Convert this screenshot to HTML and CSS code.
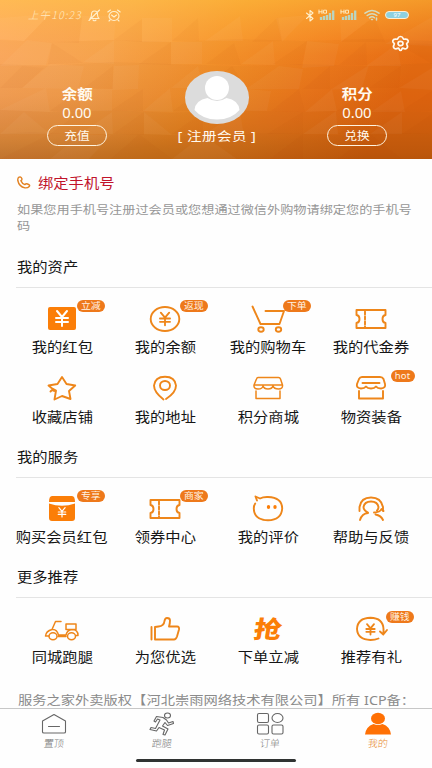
FILE: index.html
```html
<!DOCTYPE html>
<html lang="zh-CN">
<head>
<meta charset="utf-8">
<title>我的</title>
<link rel="stylesheet" href="styles.css">
</head>
<body>
<svg class="defs" width="0" height="0">
  <defs>
    <linearGradient id="bgx" x1="0" y1="0" x2="1" y2=".2">
      <stop offset="0" stop-color="#ffae69"/><stop offset=".3" stop-color="#faa650"/><stop offset=".55" stop-color="#f6932b"/><stop offset=".8" stop-color="#f17a1b"/><stop offset="1" stop-color="#e7680f"/>
    </linearGradient>
    <linearGradient id="bgy" x1="0" y1="0" x2="0" y2="1">
      <stop offset="0" stop-color="#ffc640" stop-opacity=".5"/><stop offset=".35" stop-color="#ffb040" stop-opacity=".08"/><stop offset=".6" stop-color="#c06020" stop-opacity=".1"/><stop offset=".83" stop-color="#a85a14" stop-opacity=".28"/><stop offset="1" stop-color="#93500e" stop-opacity=".46"/>
    </linearGradient>
    <g id="ticket"><path d="M11.500 11h29v5q-3 .5-3 4t3 4v5h-29v-5q3-.5 3-4t-3-4z"/><path d="M20 12.500v16" stroke-dasharray="3 2"/></g>
    <g id="yen"><path d="M-5-7 0-1 5-7M0-1V8M-6 0H6M-6 4H6"/></g>
  </defs>
</svg>
<div class="screen">
  <header class="hero">
    <svg class="hero-bg" viewBox="0 0 432 159" preserveAspectRatio="none">
      <path fill="url(#bgx)" d="M0 0h432v159H0z"/><path fill="url(#bgy)" d="M0 0h432v159H0z"/>
      <g fill="#8a3300" fill-opacity=".035">
        <path d="M0 40 50 42 114 40 172 42 237 39 303 41 370 39 432 41V159H0z"/>
        <path d="M0 64 46 66 112 62 171 64 235 66 300 64 366 66 432 63V159H0z"/>
        <path d="M0 110 50 112 112 110 170 113 240 110 301 112 367 110 432 112V159H0z"/>
        <path d="M0 134 30 132 80 135 139 134 203 136 270 133 335 135 400 133 432 134V159H0z"/>
      </g>
      <g fill="#fff" fill-opacity=".035">
        <path d="M0 18 50 14 24 41 0 39zM82 16h34l-2 24-35 1zM142 18h30v24h-30zM205 41l35-25 3 25zM276 18l32-3-26 27zM340 15l32 3-31 24zM385 44l47-27v29z"/>
        <path d="M0 66 27 40 52 43 46 65zM83 62l31-22v24zM171 42h31v22h-31zM241 64l32-23 2 24zM307 41l32 3-5 22-32 2zM366 66l31-22 4 22z"/>
        <path d="M22 88 50 64 84 66 78 89zM112 90l2-24 25-1-1 24zM171 88l27-22 5 22zM246 89l33-23 24 3-4 20zM330 90l39-25-7 23zM399 88l33-20v22z"/>
        <path d="M0 110 46 88 50 112zM80 111V89h32v22zM143 111l27-23 3 24zM216 111l30-22 25 2-4 20zM305 112l27-23 5 22zM371 112l30-21 4 21z"/>
        <path d="M0 134 24 112l26 22zM80 134l32-22 1 22zM144 134v-22l28 23zM203 135l37-24 4 25zM303 134l33-23 2 23zM370 134l32-22v22zM50 159l30-24 31 0-22 24zM172 159l31-24 34 24z"/>
      </g>
      <g fill="#a63d00" fill-opacity=".035">
        <path d="M24 41 50 14l32 4-3 25zM114 40l28-21v23zM172 41l26-23 1 23zM252 42l26-25 4 24zM341 42l33-25 11 25z"/>
        <path d="M52 43l31 20-35 1zM139 64l32-22v23zM206 64l28-21 7 22zM273 64l34-23-5 24zM339 65l27-23 1 23zM397 43l35 1v20z"/>
        <path d="M0 88l22-22 22 2-22 20zM84 88l29-22v23zM202 88l30-22 14 22zM303 89l27-23v23zM369 88l32-22-2 22z"/>
        <path d="M50 111l30-22v23zM112 110l31-21v22zM173 111l30-22 13 22zM271 111l28-22 6 23zM337 111l30-22 4 22zM401 111l31-20v20z"/>
        <path d="M50 134l30-22v22zM113 134l31-22v23zM172 134l31-22v23zM267 134l36-22v22zM338 134l31-22 1 22zM402 134l30-20v20zM0 159l50-25v25zM111 159l28-25 33 25zM270 159l33-25v25zM338 159l32-25 32 25z"/>
      </g>
    </svg>
    <div class="status">
      <div class="status-left">
        <span class="time">上午10:23</span>
        <svg width="13" height="13" viewBox="0 0 13 13"><path d="M2 9.500q1.500-1.500 1.500-4 0-3.500 3-3.500t3 3.500q0 2.500 1.500 4zM5 11q1.500 1.500 3 0M1 11.500 11.500 1"/></svg>
        <svg width="14" height="13" viewBox="0 0 14 13"><ellipse cx="7" cy="7" rx="5" ry="4.500"/><path d="M.8 3 3.500 1M13.200 3 10.500 1M4.500 6 7 8l2.500-2M3 11l-1 1M11 11l1 1"/></svg>
      </div>
      <div class="status-right">
        <svg width="10" height="13" viewBox="0 0 10 13"><path d="M1.500 4 8 9.500 5 12V1.500l3 2.500-6.500 5.500"/></svg>
        <svg class="sig" width="17" height="12" viewBox="0 0 17 12"><path class="bars" d="M3 11V8M6 11V7M9 11V6M12 11V4M15.200 11V1.500"/><path d="M1 1v3.500M4 1v3.500M1 2.800h3M6 1.200h2.500V4.200H6z" stroke-width=".9"/></svg>
        <svg class="sig second" width="17" height="12" viewBox="0 0 17 12"><path class="bars" d="M3 11V8M6 11V7M9 11V6M12 11V4M15.200 11V1.500"/><path d="M1 1v3.500M4 1v3.500M1 2.800h3M6 1.200h2.500V4.200H6z" stroke-width=".9"/></svg>
        <svg class="wifi" width="16" height="12" viewBox="0 0 16 12"><path d="M1 4.200q7-5.400 14 0M3.200 6.500q4.800-3.500 9.600 0M5.500 8.800q2.500-2 5 0M7.500 10.500h1M12.500 9v2"/></svg>
        <span class="battery">97</span>
      </div>
    </div>
    <svg class="gear" width="19" height="17" viewBox="0 0 19 17"><path d="M9.500 1.500q2 0 2.700 2 .5 1 2 .7 2.500-.2 3 1.600.4 1.400-1.200 2.400-.8.700 0 1.800 1.200 2-.1 3.100-1.600 1.400-3.600.2-.9-.4-1.500.8-.5 1.400-1.300 1.400t-1.300-1.400q-.6-1.200-1.500-.8-2 1.200-3.600-.2-1.300-1.100-.1-3.100.8-1.100 0-1.800Q1.400 7.200 1.800 5.800q.5-1.800 3-1.600 1.500.3 2-.7.700-2 2.700-2z"/><ellipse cx="9.500" cy="8.500" rx="2.500" ry="2.200"/></svg>
    <div class="account">
      <div class="stat"><b class="t">余额</b><span class="num">0.00</span><span class="pill"><span class="t">充值</span></span></div>
      <div class="member">
        <svg width="66" height="54" viewBox="0 0 66 54"><ellipse cx="33" cy="27.500" rx="32" ry="26.500" fill="#dcdcdc"/><ellipse cx="33" cy="18" rx="12" ry="12" fill="#fff"/><path d="M10.500 40q1-10 13-12 9.500 6 19 0 12 2 13 12-8 9.500-22.500 9.500T10.500 40z" fill="#fff"/></svg>
        <span class="t">[ 注册会员 ]</span>
      </div>
      <div class="stat"><b class="t">积分</b><span class="num">0.00</span><span class="pill"><span class="t">兑换</span></span></div>
    </div>
  </header>
  <main>
    <div class="bind">
      <div class="bind-title"><svg width="14" height="13" viewBox="0 0 14 13"><path d="M2 1.200q2-.9 2.800 1.300.5 1.500-.9 2.200 1 2.600 4 3.900 1-1.200 2.700-.6 3 1 1.600 2.500-1.400 1.600-4.200 1.400Q2 10.500.8 4.500.5 2 2 1.200z"/></svg><span class="t">绑定手机号</span></div>
      <p class="t">如果您用手机号注册过会员或您想通过微信外购物请绑定您的手机号码</p>
    </div>
    <section>
      <h2><span class="t">我的资产</span></h2>
      <div class="grid">
        <div class="cell"><svg viewBox="0 0 52 40"><rect class="fill" x="12" y="8" width="28" height="23" rx="2"/><use href="#yen" class="white" transform="translate(26 19)"/></svg><i><span>立减</span></i><span class="t">我的红包</span></div>
        <div class="cell"><svg viewBox="0 0 52 40"><ellipse cx="26" cy="20" rx="14.300" ry="12"/><use href="#yen" transform="translate(26 19.500) scale(.84)" stroke-width="2.200"/></svg><i><span>返现</span></i><span class="t">我的余额</span></div>
        <div class="cell"><svg viewBox="0 0 52 40"><path d="M10.500 7.500 18.500 25H37.500L42 12H23.500"/><ellipse cx="19" cy="30.500" rx="2.700" ry="2.200"/><ellipse cx="36.500" cy="30.500" rx="2.700" ry="2.200"/></svg><i><span>下单</span></i><span class="t">我的购物车</span></div>
        <div class="cell"><svg viewBox="0 0 52 40"><use href="#ticket"/></svg><span class="t">我的代金券</span></div>
        <div class="cell"><svg viewBox="0 0 52 40"><path d="M14.500 22.500 16 21 18 22M15.500 19 12.500 16.500 21.500 15 26 8l4.500 7 8.700 1.500-6.200 5.500 1.500 8L26 27l-7.500 3.500 1.500-9z"/></svg><span class="t">收藏店铺</span></div>
        <div class="cell"><svg viewBox="0 0 52 40"><path d="M24.500 30.500Q15 23 15 16.500 16 7.700 26 7.700T37 16.500q0 7-10 13.500"/><ellipse cx="26" cy="16.500" rx="5" ry="4.500"/></svg><span class="t">我的地址</span></div>
        <div class="cell"><svg class="thin" viewBox="0 0 52 40"><path d="M16 8.500H36.500Q38 8.500 38.500 10L40.500 16H12L14.500 10Q15 8.500 16 8.500zM12 16q-.5 4 4 4t5-3q1 3 5 3t5-3q1 3 5.500 3t4-4M14 22v7.500h24V22"/></svg><span class="t">积分商城</span></div>
        <div class="cell"><svg viewBox="0 0 52 40"><path d="M17 8h18q2.500 0 3.500 2L40 15q1 4-4 4.500-3.500 0-5-2-1.500 2-5 2t-5-2q-1.500 2-5 2-5-.5-4-4.500l2-5q1-2 3-2zM17.500 14h17M14 22v7.500h24V22"/></svg><i class="hot"><span>hot</span></i><span class="t">物资装备</span></div>
      </div>
    </section>
    <section>
      <h2><span class="t">我的服务</span></h2>
      <div class="grid">
        <div class="cell"><svg viewBox="0 0 52 40"><path class="fill" d="M13 13q0-6 3-6h20q3 0 3 6zM13 14.500q13 4.500 26 0V29q0 3-3 3H16q-3 0-3-3z"/><use href="#yen" class="white" transform="translate(26 23) scale(.62)"/></svg><i><span>专享</span></i><span class="t">购买会员红包</span></div>
        <div class="cell"><svg viewBox="0 0 52 40"><use href="#ticket"/></svg><i><span>商家</span></i><span class="t">领券中心</span></div>
        <div class="cell"><svg viewBox="0 0 52 40"><path d="M15 11.500 13.500 7.500 18 9.500Q21 7.800 26 8q14 .5 14.200 11.500Q39.500 31 26 31.300 12 31 11.800 19.500q0-3 1.400-5"/><ellipse class="fill" cx="26.500" cy="18" rx="1.700" ry="2"/><ellipse class="fill" cx="33" cy="18" rx="1.700" ry="2"/></svg><span class="t">我的评价</span></div>
        <div class="cell"><svg viewBox="0 0 52 40"><path d="M14.500 22v-4Q16 8.500 26 8.500T38 18v4M23 23.500Q18.500 21.500 18.500 18q1-5.500 7.500-5.500t7.500 5.500q0 2-1.500 3.500M29 23.500q6 0 7.500-3.500l2 2M15 31q2-6.500 8-7M30.500 25.500q5.500 1 7.500 5.500"/></svg><span class="t">帮助与反馈</span></div>
      </div>
    </section>
    <section>
      <h2><span class="t">更多推荐</span></h2>
      <div class="grid">
        <div class="cell"><svg class="thin" viewBox="0 0 52 40"><path d="M25 12.500H19.500L16 20.500Q10 22 9.500 27H13M30 15h10v5.500H30zM17 20.500q4 0 5.500 5.500h7.500q1-5 6-5.500 6 0 6 6H40M22 27.500h8"/><ellipse cx="17" cy="27.200" rx="4" ry="3.500"/><ellipse cx="35.500" cy="27.200" rx="4" ry="3.500"/></svg><span class="t">同城跑腿</span></div>
        <div class="cell"><svg viewBox="0 0 52 40"><path d="M12.500 18v12.500M16 18v12.500h19q2 0 3-3l2-7q.5-3-2-3h-8q1-3 1-6 0-2.500-3-2.500-2 0-2.500 3-.5 5-6 5.500z"/></svg><span class="t">为您优选</span></div>
        <div class="cell"><div class="grab">抢</div><span class="t">下单立减</span></div>
        <div class="cell"><svg viewBox="0 0 52 40"><path d="M33.500 29.500q-3.500 1.500-8 1.500Q12.500 30.500 12 20 12.500 9 25.500 8.700 38 9 38.500 20v4M35 22.500 38.300 25.500 42 21"/><use href="#yen" transform="translate(25.500 20) scale(.7)" stroke-width="2.600"/></svg><i class="earn"><span>赚钱</span></i><span class="t">推荐有礼</span></div>
      </div>
    </section>
    <div class="copyright"><span class="t">服务之家外卖版权【河北崇雨网络技术有限公司】所有 ICP备：</span></div>
  </main>
  <nav>
    <a><svg viewBox="0 0 32 26"><path d="M4.500 10 16 3.500 27.500 10v11q0 1-1.500 1H6Q4.500 22 4.500 21zM10.500 15.500h11"/></svg><span>置顶</span></a>
    <a><svg viewBox="0 0 32 26"><ellipse cx="21.500" cy="4.500" rx="3" ry="2.500"/><path d="M8 10 10.500 5.500 17 6.500 20.500 9 22.500 12 27 10.500 27.500 12.500 21.500 14.500 19 11.500 16.500 15 22 18 19 24 17 23.500 18.500 19 13 16.500 10.500 20 4 18.500 5 16.500 9.500 17.500 14 9 11.500 8 9.500 11z"/></svg><span>跑腿</span></a>
    <a><svg viewBox="0 0 32 26"><rect x="3.500" y="2.500" width="11" height="9" rx="1.500"/><ellipse cx="23.500" cy="7" rx="5.500" ry="4.500"/><rect x="3.500" y="14" width="11" height="9" rx="1.500"/><rect x="18" y="14" width="11" height="9" rx="1.500"/></svg><span>订单</span></a>
    <a class="active"><svg viewBox="0 0 32 26"><ellipse cx="16" cy="7.500" rx="7" ry="5.800"/><path d="M3 23.500q1-8 8.500-10.500 4.500 2 9 0 7.500 2.500 8.500 10.500z"/></svg><span>我的</span></a>
  </nav>
  <div class="home"></div>
</div>
</body>
</html>
```
FILE: styles.css
```css
* { box-sizing: border-box; }
body { margin: 0; background: #fefefe; font-family: "Noto Sans", "Noto Sans CJK SC", sans-serif; color: #151515; }
.defs { position: absolute; }
.screen { width: 432px; height: 768px; overflow: hidden; display: flex; flex-direction: column; position: relative; }
.t { display: inline-block; transform: scaleX(1.16); white-space: nowrap; }
svg { fill: none; stroke-linecap: round; stroke-linejoin: round; display: block; flex: none; }

.hero { height: 159px; position: relative; color: #fffaf0; flex: none; display: flex; flex-direction: column; }
.hero-bg { position: absolute; inset: 0; width: 100%; height: 100%; }
.status, .gear, .account { position: relative; }
.status { display: flex; justify-content: space-between; height: 30px; padding: 0 23px 0 28px; }
.status svg { stroke: #fff0cd; stroke-width: 1.1; }
.status-left, .status-right { display: flex; align-items: center; }
.time { font: italic 300 10.500px/14px "Noto Sans CJK SC", sans-serif; letter-spacing: 1.100px; color: #ffe9c0; width: 60px; white-space: nowrap; }
.status-left svg + svg { margin-left: 6px; }
.sig { margin-left: 3px; }
.status .second { margin-left: 5px; }
.status .bars { stroke: #b9d5c2; stroke-width: 2.300; stroke-linecap: butt; }
.status .wifi { margin-left: 7px; stroke: #d2dcc1; stroke-width: 1.500; }
.battery { width: 24px; height: 8px; margin-left: 5px; border: 1px solid #fff0d4; border-radius: 4px; background: #8ed0df; color: #fff; font: 6px/6px "Noto Sans", sans-serif; text-align: center; }
.gear { align-self: flex-end; margin: 5px 22px 0 0; stroke: #fffaf0; stroke-width: 1.700; }
.account { display: flex; padding: 18px 15px 0 17px; justify-content: space-between; }
.stat { width: 120px; padding-top: 15px; display: flex; flex-direction: column; align-items: center; }
.stat b { font-size: 13.300px; line-height: 19px; }
.num { font-size: 14px; line-height: 18px; transform: scaleX(1.060); }
.pill { width: 60px; height: 21px; border: 1.500px solid #fff4e0; border-radius: 11px; margin-top: 3px; font-size: 11px; line-height: 19px; text-align: center; }
.member { display: flex; flex-direction: column; align-items: center; font-size: 12.500px; line-height: 18px; letter-spacing: .4px; }
.member .t { margin-top: 4px; }

.bind { height: 89px; padding: 15px 17px 0; }
.bind-title { display: flex; align-items: center; height: 17px; font-size: 13.200px; color: #c1142b; }
.bind-title svg { stroke: #e38222; stroke-width: 1.400; margin-right: 7px; }
.bind-title .t { transform-origin: left; }
.bind p { margin: 11px 0 0 -.5px; width: 342px; transform-origin: left; white-space: normal; font-size: 11.350px; line-height: 15.500px; color: #969696; }
h2 { margin: 0 0 0 16px; height: 40px; border-bottom: 1px solid #e4e4e4; font-size: 13.200px; font-weight: 400; line-height: 39px; }
section + section h2 { height: 50px; padding-top: 10px; }
h2 .t { transform-origin: left; margin-left: .5px; }
.grid { display: grid; grid-template-columns: repeat(4, 103px); padding-left: 10.500px; }
.cell { height: 70px; padding-top: 11px; position: relative; display: flex; flex-direction: column; align-items: center; }
.cell svg { width: 52px; height: 40px; stroke: #ee861a; stroke-width: 1.900; }
.cell svg.thin { stroke-width: 1.500; }
.cell .fill { fill: #fb7e08; stroke: none; }
.cell .white { stroke: #fff; stroke-width: 2; }
.cell .t { font-size: 13.200px; line-height: 16px; }
.cell i { position: absolute; left: 66.500px; top: 11.500px; width: 28px; height: 12px; border-radius: 6px; background: #ee791b; color: #fff3e4; font-size: 8.800px; font-style: normal; line-height: 12px; text-align: center; }
.cell i span { display: inline-block; transform: scaleX(1.120); }
.cell i.hot { left: 71px; width: 24px; font-size: 9.500px; line-height: 11px; }
.cell i.hot span { letter-spacing: .2px; transform: none; }
.cell i.earn { left: 66px; top: 12.500px; }
.grab { height: 40px; color: #fb7e08; font-size: 24px; line-height: 40px; font-weight: 900; transform: scaleX(1.160) skewX(-8deg); }
.copyright { height: 40px; padding: 23px 0 0 18px; color: #8b8b8b; font-size: 12.300px; line-height: 20px; }
.copyright .t { transform-origin: left; }

nav { height: 60px; flex: none; border-top: 1px solid #c7c7c7; background: #fefefe; display: grid; grid-template-columns: repeat(4, 1fr); position: relative; }
nav a { display: flex; flex-direction: column; align-items: center; padding-top: 2px; color: #777; font: 300 10px/12px "Noto Sans CJK SC", sans-serif; }
nav span { transform: skewX(-6deg); }
nav svg { width: 32px; height: 26px; stroke: #666; stroke-width: 1.100; }
nav .active { color: #e8892d; }
nav .active svg { fill: #ff7004; stroke: none; }
main { height: 549px; flex: none; overflow: hidden; }
.home { position: absolute; left: 136px; top: 759px; width: 160px; height: 3px; border-radius: 2px; background: #303332; }
```
